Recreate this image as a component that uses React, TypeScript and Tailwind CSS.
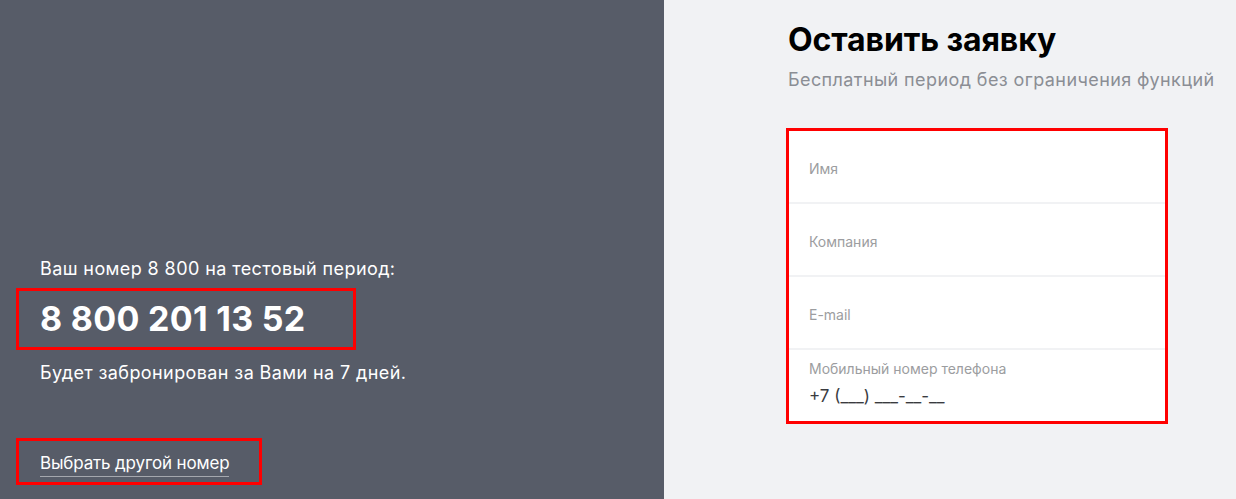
import React from "react";

const fields = ["Имя", "Компания", "E-mail"];

const App: React.FC = () => {
  return (
    <div
      className="flex h-[499px] w-[1236px] overflow-hidden bg-[#f1f2f4]"
      style={{ fontFamily: "Inter, 'Noto Sans', sans-serif" }}
    >
      {/* left panel */}
      <div className="flex h-full w-[664px] shrink-0 flex-col justify-end bg-[#575c68] pb-[14px] pl-4 text-white">
        <p className="pl-6 text-[18px] leading-6 tracking-[0.4px]">Ваш номер 8 800 на тестовый период:</p>
        <div className="mt-[7px] flex h-[62px] w-[340px] items-center border-[3px] border-[#ff0000] pl-[21px]">
          <span className="text-[34px] font-bold leading-none tracking-[0.3px]">8 800 201 13 52</span>
        </div>
        <p className="mt-[11px] pl-6 text-[18px] leading-6 tracking-[0.4px]">Будет забронирован за Вами на 7 дней.</p>
        <div className="mt-[53px] flex h-[47px] w-[246px] items-start border-[3px] border-[#ff0000] pl-[21px] pt-[12px]">
          <span className="border-b border-[#a5a8ae] pb-[3px] text-[17px] leading-5 tracking-[-0.15px]">
            Выбрать другой номер
          </span>
        </div>
      </div>

      {/* right panel */}
      <div className="flex flex-col pl-[124px] pt-[20px]">
        <h1 className="text-[32px] font-bold leading-10 tracking-[-0.1px] text-black">Оставить заявку</h1>
        <p className="mt-[8px] text-[18px] leading-6 tracking-[0.4px] text-[#8b8e94]">
          Бесплатный период без ограничения функций
        </p>
        <div className="-ml-[2px] mt-[36px] flex w-[382px] flex-col gap-[2px] border-[3px] border-[#ff0000] bg-[#f1f2f4]">
          {fields.map((f) => (
            <div key={f} className="flex h-[71px] items-center bg-white pl-[20px] pt-[3px] text-[14px] text-[#9c9da0]">
              {f}
            </div>
          ))}
          <div className="flex h-[71px] flex-col bg-white pl-[20px] pt-[9px]">
            <span className="text-[14px] leading-5 text-[#9c9da0]">Мобильный номер телефона</span>
            <span className="mt-[7px] text-[17px] leading-5 text-[#3a3b3f]">+7 (___) ___-__-__</span>
          </div>
        </div>
      </div>
    </div>
  );
};

export default App;
